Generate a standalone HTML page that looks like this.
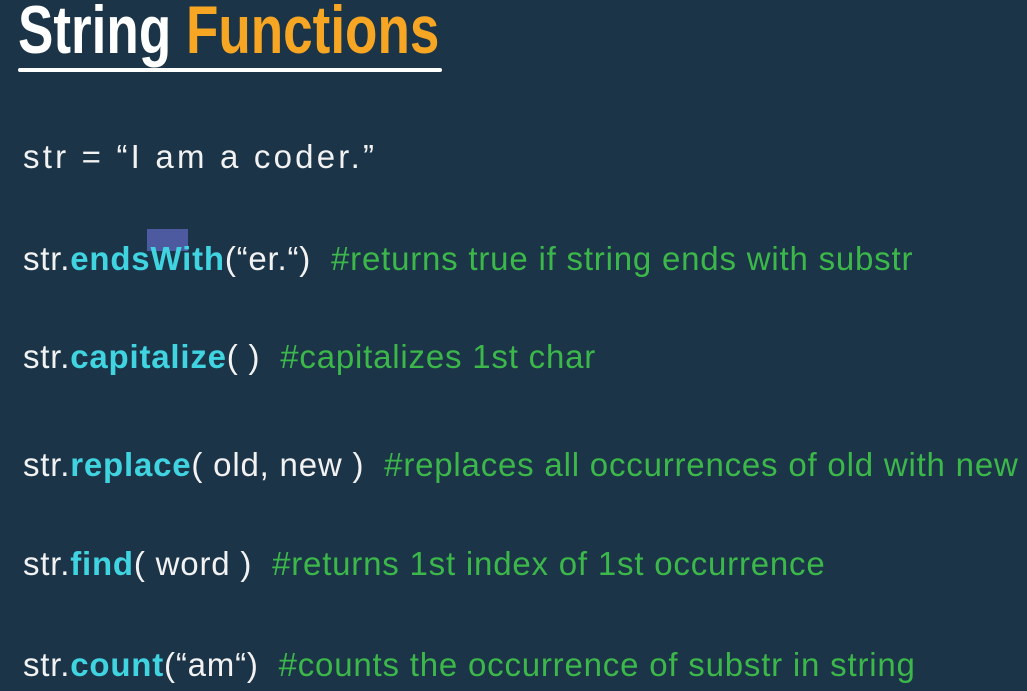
<html><head><style>
body{margin:0;width:1027px;height:691px;background:#1b3447;overflow:hidden;position:relative;font-family:"Liberation Sans",sans-serif}
.t{position:absolute;left:18px;top:-9px;font-family:"Liberation Sans",sans-serif;font-weight:bold;font-size:68px;color:#fff;transform:scaleX(0.78);transform-origin:left;white-space:nowrap}
.t span{color:#f6a623}
.u{position:absolute;left:18px;top:68px;width:424px;height:4px;background:#fff;border-radius:2px}
.l{position:absolute;left:23px;font-size:33px;color:#f2f2f2;white-space:nowrap;letter-spacing:0.8px}
.c{color:#40d3e0;font-weight:bold}
.g{color:#3cb84a}
.hl{position:absolute;left:147px;top:229px;width:41px;height:22px;background:#4d5aa0}
</style></head><body>
<div class="t">String <span>Functions</span></div>
<div class="u"></div>
<div class="l" style="top:138px;letter-spacing:3.2px">str = “I am a coder.”</div>
<div class="hl"></div>
<div class="l" style="top:240px">str.<span class="c">endsWith</span>(“er.“)&nbsp; <span class="g">#returns true if string ends with substr</span></div>
<div class="l" style="top:338px">str.<span class="c">capitalize</span>( )&nbsp; <span class="g">#capitalizes 1st char</span></div>
<div class="l" style="top:446px">str.<span class="c">replace</span>( old, new )&nbsp; <span class="g">#replaces all occurrences of old with new</span></div>
<div class="l" style="top:545px">str.<span class="c">find</span>( word )&nbsp; <span class="g">#returns 1st index of 1st occurrence</span></div>
<div class="l" style="top:646px">str.<span class="c">count</span>(“am“)&nbsp; <span class="g">#counts the occurrence of substr in string</span></div>
</body></html>
